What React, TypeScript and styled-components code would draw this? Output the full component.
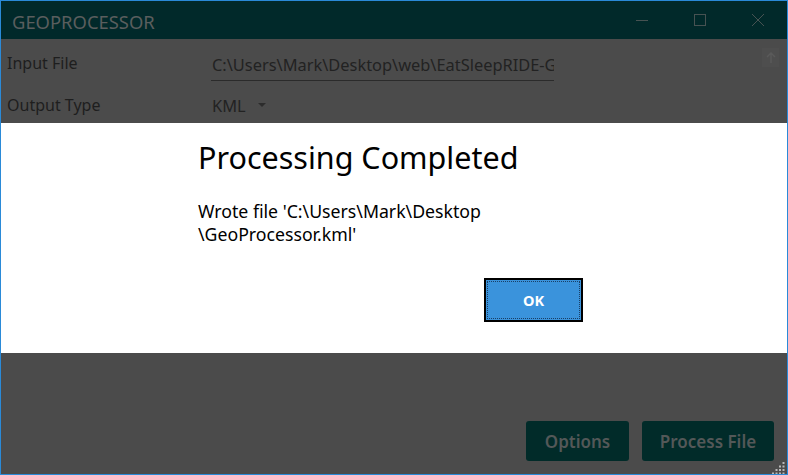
import React from "react";
import styled, { createGlobalStyle } from "styled-components";

const Global = createGlobalStyle`
  html, body { margin: 0; padding: 0; background: #ffffff; }
  body { font-family: "Segoe UI", "Noto Sans", "Open Sans", sans-serif; }
  * { box-sizing: border-box; }
`;

const Window = styled.div`
  position: relative;
  width: 788px;
  height: 475px;
  border: 1px solid #2a8ad8;
  display: flex;
  flex-direction: column;
  overflow: hidden;
  background: #4b4b4b;
`;

const TitleBar = styled.div`
  height: 38px;
  flex: none;
  background: #01292a;
  display: flex;
  align-items: center;
  padding-left: 11px;
`;

const Title = styled.div`
  flex: 1;
  color: #5a5e5e;
  font-size: 18.4px;
  margin-top: 2px;
`;

const Caption = styled.div`
  width: 58px;
  height: 38px;
  display: flex;
  align-items: center;
  justify-content: center;
`;

const Body = styled.div`
  flex: 1;
  display: flex;
  flex-direction: column;
  padding: 3px 13px 13px 0;
  position: relative;
`;

const Form = styled.div`
  display: grid;
  grid-template-columns: 210px 343px;
  grid-auto-rows: 42px;
  align-items: center;
`;

const Label = styled.div`
  padding-left: 6px;
  color: #1e1e1e;
  font-size: 16px;
`;

const InputBox = styled.div`
  height: 32px;
  border-bottom: 1px solid #2b2b2b;
  display: flex;
  align-items: center;
  padding-left: 1px;
  color: #222222;
  font-size: 16.4px;
  white-space: nowrap;
  overflow: hidden;
  margin-top: 4px;
`;

const Select = styled.div`
  display: flex;
  align-items: center;
  gap: 11px;
  color: #222222;
  font-size: 16.4px;
  padding-left: 1px;
`;

const UpButton = styled.div`
  position: absolute;
  top: 9px;
  right: 8px;
  width: 17px;
  height: 19px;
  background: #4e4e4e;
  display: flex;
  align-items: center;
  justify-content: center;
`;

const Footer = styled.div`
  margin-top: auto;
  display: flex;
  justify-content: flex-end;
  gap: 13px;
`;

const DarkButton = styled.div<{ $w: number }>`
  width: ${(p) => p.$w}px;
  height: 40px;
  border-radius: 3px;
  background: #012b29;
  color: #535858;
  font-size: 17px;
  font-weight: 600;
  display: flex;
  align-items: center;
  justify-content: center;
`;

const Grip = styled.div`
  position: absolute;
  right: 1px;
  bottom: 1px;
  width: 14px;
  height: 14px;
`;

const Overlay = styled.div`
  position: absolute;
  left: 0;
  right: 0;
  top: 122px;
  height: 230px;
  background: #ffffff;
  display: flex;
  justify-content: center;
`;

const DialogContent = styled.div`
  width: 385px;
  margin-right: 7px;
  padding-top: 14px;
  display: flex;
  flex-direction: column;
`;

const DialogTitle = styled.div`
  font-size: 30.5px;
  color: #000000;
  line-height: 40px;
  white-space: nowrap;
`;

const Message = styled.div`
  margin-top: 23px;
  font-size: 17.7px;
  line-height: 23px;
  color: #000000;
  white-space: nowrap;
`;

const Actions = styled.div`
  display: flex;
  justify-content: flex-end;
  margin-top: 32px;
`;

const OkButton = styled.div`
  width: 99px;
  height: 44px;
  border: 2px solid #000000;
  background: #3a93dc;
  padding: 1px;
  display: flex;
`;

const FocusRing = styled.div`
  flex: 1;
  border: 1px dotted #1a3f66;
  display: flex;
  align-items: center;
  justify-content: center;
  color: #ffffff;
  font-weight: 700;
  font-size: 14.5px;
`;

const MinIcon = () => (
  <svg width="14" height="14" viewBox="0 0 14 14">
    <line x1="1" y1="7.5" x2="13" y2="7.5" stroke="#475252" strokeWidth="1" />
  </svg>
);
const MaxIcon = () => (
  <svg width="14" height="14" viewBox="0 0 14 14">
    <rect x="1.5" y="1.5" width="11" height="11" fill="none" stroke="#475252" strokeWidth="1" />
  </svg>
);
const CloseIcon = () => (
  <svg width="14" height="14" viewBox="0 0 14 14">
    <path d="M1 1 L13 13 M13 1 L1 13" stroke="#475252" strokeWidth="1" />
  </svg>
);

const Arrow = () => (
  <svg width="10" height="6" viewBox="0 0 10 6">
    <path d="M1 1 L9 1 L5 5 Z" fill="#2c2c2c" />
  </svg>
);

const UpArrow = () => (
  <svg width="10" height="12" viewBox="0 0 10 12">
    <path d="M5 1 L5 11 M1 5 L5 1 L9 5" stroke="#5a5a5a" strokeWidth="1.5" fill="none" />
  </svg>
);

const GripDots = () => {
  const dots: React.ReactNode[] = [];
  for (let r = 0; r < 4; r++) {
    for (let c = 3 - r; c < 4; c++) {
      dots.push(<rect key={`${r}-${c}`} x={c * 3.5} y={r * 3.5} width="2" height="2" fill="#b8b8b8" />);
    }
  }
  return (
    <svg width="14" height="14" viewBox="0 0 14 14">
      {dots}
    </svg>
  );
};

export default function App() {
  return (
    <>
      <Global />
      <Window>
        <TitleBar>
          <Title>GEOPROCESSOR</Title>
          <Caption><MinIcon /></Caption>
          <Caption><MaxIcon /></Caption>
          <Caption><CloseIcon /></Caption>
        </TitleBar>
        <Body>
          <Form>
            <Label>Input File</Label>
            <InputBox>C:\Users\Mark\Desktop\web\EatSleepRIDE-GeoProcessor.gpx</InputBox>
            <Label>Output Type</Label>
            <Select>
              KML <Arrow />
            </Select>
          </Form>
          <UpButton><UpArrow /></UpButton>
          <Footer>
            <DarkButton $w={103}>Options</DarkButton>
            <DarkButton $w={132}>Process File</DarkButton>
          </Footer>
          <Grip><GripDots /></Grip>
        </Body>
        <Overlay>
          <DialogContent>
            <DialogTitle>Processing Completed</DialogTitle>
            <Message>
              Wrote file 'C:\Users\Mark\Desktop
              <br />
              \GeoProcessor.kml'
            </Message>
            <Actions>
              <OkButton>
                <FocusRing>OK</FocusRing>
              </OkButton>
            </Actions>
          </DialogContent>
        </Overlay>
      </Window>
    </>
  );
}
